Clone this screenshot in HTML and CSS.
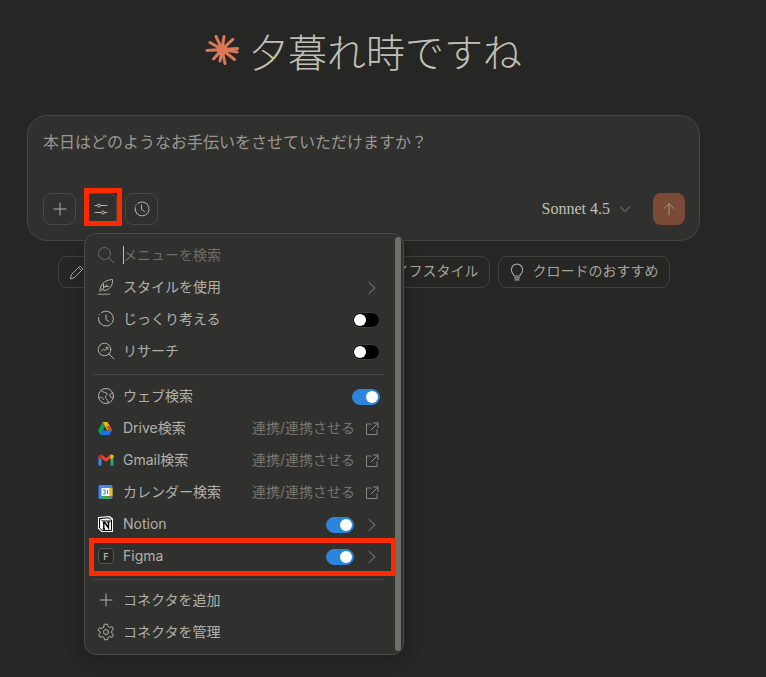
FILE: index.html
```html
<!DOCTYPE html>
<html lang="ja">
  <head>
    <meta charset="UTF-8" />
    <title>夕暮れ時ですね</title>
    <link rel="stylesheet" href="styles.css">
  </head>
  <body>
    <div class="page">
      <h1 class="greeting">
        <svg class="spark" viewBox="0 0 34 34" fill="#d97757" stroke="#d97757" stroke-width="3" stroke-linecap="round">
          <circle cx="17" cy="16.500" r="5.500" stroke="none"/>
          <path d="M17 16.500 11 3.300M17 16.500 19 3.500M17 16.500 27.800 6.300M17 16.500 32.500 15.500M17 16.500 32 19M17 16.500 29.500 26.500M17 16.500 20 30.500M17 16.500 15 28M17 16.500 8.500 26M17 16.500 2 17.500M17 16.500 5 9.500"/>
        </svg>
        <span>夕暮れ時ですね</span>
      </h1>

      <div class="composer">
        <div class="prompt">本日はどのようなお手伝いをさせていただけますか？</div>
        <div class="composer-bar">
          <button class="tool-btn">
            <svg class="ico" viewBox="0 0 16 16"><path d="M8 2v12M2 8h12"/></svg>
          </button>
          <button class="tool-btn">
            <svg class="ico" viewBox="0 0 16 16"><path d="M2 4.500h2.500M7.500 4.500H14M2 11.500h6.500M11.500 11.500H14"/><circle cx="6" cy="4.500" r="1.500"/><circle cx="10" cy="11.500" r="1.500"/></svg>
          </button>
          <button class="tool-btn">
            <svg class="ico" viewBox="0 0 16 16"><path d="M4 2.200A7 7 0 1 1 1.200 6.500"/><path d="M1.300 9.500l.1.400M2.400 12l.3.300M1.900 4.300l.3-.400"/><path d="M7.500 4v4.500l3 2"/></svg>
          </button>
          <div class="model">
            <span>Sonnet 4.5</span>
            <svg class="ico ico-small" viewBox="0 0 12 12"><path d="M1.500 4 6 8.500 10.500 4"/></svg>
          </div>
          <button class="send-btn">
            <svg class="ico" viewBox="0 0 16 16"><path d="M8 14V2.800M3.200 7.400 8 2.600l4.800 4.800"/></svg>
          </button>
        </div>
      </div>

      <div class="chips">
        <!-- first three chips sit behind the menu, their labels don't show -->
        <div class="chip chip-first">
          <svg class="ico" viewBox="0 0 16 16"><path d="M1.500 14.500 2.500 10.500 11 2l3 3-8.500 8.500zM9.500 3.500l3 3"/></svg>
        </div>
        <div class="chip chip-small"></div>
        <div class="chip chip-mid"></div>
        <div class="chip">
          <svg class="ico" viewBox="0 0 16 16"><path d="M2 14V6l6-4 6 4v8z"/></svg>
          <span class="chip-text">ライフスタイル</span>
        </div>
        <div class="chip">
          <svg class="ico chip-bulb" viewBox="0 0 16 16"><path d="M5.500 11.500C5.300 10 3 9.200 3 6a5 5 0 0 1 10 0c0 3.200-2.300 4-2.500 5.500zM5.800 13.200h4.400M6.300 15h3.400"/></svg>
          <span class="chip-text">クロードのおすすめ</span>
        </div>
      </div>

      <div class="menu">
        <div class="menu-row search-row">
          <svg class="ico row-ico" viewBox="0 0 18 18"><circle cx="7.500" cy="7.500" r="6"/><path d="M12 12l5 5"/></svg>
          <span class="caret"></span>
          <span class="label">メニューを検索</span>
        </div>
        <div class="menu-row">
          <svg class="ico row-ico" viewBox="0 0 18 18"><path d="M3 13C3 7 7 2 15.500 1.500 16 7 13 12 7 12.500L5 11M3.800 13 10 6.500M8 8.500h3.500M6.500 6.300V9.500"/><path d="M1 16.200c1-1 2 1 3 0s2 1 3 0 2 1 3 0 2 1 3 0"/></svg>
          <span class="label">スタイルを使用</span>
          <span class="row-end">
            <svg class="ico chev" viewBox="0 0 16 16"><path d="M5 2.500 11 8l-6 5.500"/></svg>
          </span>
        </div>
        <div class="menu-row">
          <svg class="ico row-ico" viewBox="0 0 18 18"><path d="M4.500 2.500A7.500 7.500 0 1 1 1.500 7.500"/><path d="M1.500 10.500v.4M2.700 13.400l.3.300M2.200 4.900l.3-.4"/><path d="M9 5v4.500l3 2"/></svg>
          <span class="label">じっくり考える</span>
          <span class="row-end"><span class="toggle"></span></span>
        </div>
        <div class="menu-row">
          <svg class="ico row-ico" viewBox="0 0 18 18"><circle cx="7.500" cy="7.500" r="6.300"/><path d="M12 12l5 5M4.500 9l2-2 1.500 1.500L10.800 5.500M9 5.500h1.800v1.800"/></svg>
          <span class="label">リサーチ</span>
          <span class="row-end"><span class="toggle"></span></span>
        </div>

        <div class="menu-line"></div>

        <div class="menu-row">
          <svg class="ico row-ico" viewBox="0 0 18 18"><circle cx="9" cy="9" r="7.500"/><path d="M4 3.500c2 2.500 5 1.500 6 3s-2 2-1.500 4 2.500 1.500 2.500 5M16 6c-2 0-3.500 1-3 3s2 1.500 3.500 1.500M2 11c2-1.500 4-.5 4.500 1.500"/></svg>
          <span class="label">ウェブ検索</span>
          <span class="row-end"><span class="toggle on"></span></span>
        </div>
        <div class="menu-row">
          <svg class="row-ico" viewBox="0 0 18 18">
            <path d="M5.500 3h5L15 11.500h-4.800z" fill="#f4b400"/>
            <path d="M9.500 8 12.300 6.500 15 11.500h-3.500z" fill="#ea4335"/>
            <path d="M5.500 3 8 7.500 3.500 16 1 11.500z" fill="#0f9d58"/>
            <path d="M5.800 11.500H15L12.500 16h-9z" fill="#1a73e8"/>
          </svg>
          <span class="label">Drive検索</span>
          <span class="row-end">
            <span class="connect">連携/連携させる</span>
            <svg class="ico ext" viewBox="0 0 16 16"><path d="M7 3H2.500v10.500H13V9M9.500 2H14v4.500M14 2 7.500 8.500"/></svg>
          </span>
        </div>
        <div class="menu-row">
          <svg class="row-ico" viewBox="0 0 18 18">
            <path d="M1.500 5v9.500h3V8z" fill="#4285f4"/>
            <path d="M13.500 8v6.500h3V5z" fill="#34a853"/>
            <path d="M1.500 5 4.500 3.500 9 7l4.500-3.500L16.500 5 9 10.800z" fill="#ea4335"/>
            <path d="M13.500 3.500l3 .6V6.500l-3 2z" fill="#fbbc04"/>
            <path d="M1.500 4.100l3-.6v5l-3-2z" fill="#c5221f"/>
          </svg>
          <span class="label">Gmail検索</span>
          <span class="row-end">
            <span class="connect">連携/連携させる</span>
            <svg class="ico ext" viewBox="0 0 16 16"><path d="M7 3H2.500v10.500H13V9M9.500 2H14v4.500M14 2 7.500 8.500"/></svg>
          </span>
        </div>
        <div class="menu-row">
          <svg class="row-ico" viewBox="0 0 18 18">
            <rect x="1.500" y="2" width="14" height="14" rx="1.500" fill="#4285f4"/>
            <rect x="12.500" y="5" width="3" height="8" fill="#fbbc04"/>
            <rect x="4.500" y="13" width="8" height="3" fill="#34a853"/>
            <path d="M12.500 13h3l-3 3z" fill="#ea4335"/>
            <rect x="4.500" y="5" width="8" height="8" fill="#fff"/>
            <path d="M6 7h2v4H6M9 9h-1M10.500 7v4" fill="none" stroke="#4285f4" stroke-width="1"/>
          </svg>
          <span class="label">カレンダー検索</span>
          <span class="row-end">
            <span class="connect">連携/連携させる</span>
            <svg class="ico ext" viewBox="0 0 16 16"><path d="M7 3H2.500v10.500H13V9M9.500 2H14v4.500M14 2 7.500 8.500"/></svg>
          </span>
        </div>
        <div class="menu-row">
          <svg class="row-ico" viewBox="0 0 18 18">
            <path d="M1 2 12.500 1 16 3.500V17H4.500L1 13.500z" fill="#fff"/>
            <path d="M2.500 3.500 12 2.800 14.500 5v10.500H5.200L2.500 13z" fill="#fff" stroke="#000" stroke-width="1"/>
            <path d="M4 4.500 5.500 6h9" fill="none" stroke="#000" stroke-width="1"/>
            <path d="M6.800 14V7.500h1L11.500 13V7.300M5.800 14h2.200M5.800 7.500h2M10.300 7.300h2.400" fill="none" stroke="#000" stroke-width="1.400"/>
          </svg>
          <span class="label">Notion</span>
          <span class="row-end">
            <span class="toggle on"></span>
            <svg class="ico chev" viewBox="0 0 16 16"><path d="M5 2.500 11 8l-6 5.500"/></svg>
          </span>
        </div>
        <div class="menu-row">
          <span class="letter-ico row-ico">F</span>
          <span class="label">Figma</span>
          <span class="row-end">
            <span class="toggle on"></span>
            <svg class="ico chev" viewBox="0 0 16 16"><path d="M5 2.500 11 8l-6 5.500"/></svg>
          </span>
        </div>

        <div class="menu-line menu-line-last"></div>

        <div class="menu-row">
          <svg class="ico row-ico" viewBox="0 0 18 18"><path d="M9 3v12M3 9h12"/></svg>
          <span class="label">コネクタを追加</span>
        </div>
        <div class="menu-row">
          <svg class="ico row-ico" viewBox="0 0 18 18"><circle cx="9" cy="9" r="2.500"/><path d="M7.500 1.200h3l.5 2.300 1.700 1 2.300-.8 1.500 2.600-1.800 1.500v2.400l1.800 1.500-1.500 2.600-2.300-.8-1.700 1-.5 2.300h-3l-.5-2.300-1.700-1-2.300.8-1.500-2.600 1.800-1.500V8.800L1 7.300l1.500-2.600 2.300.8 1.700-1z"/></svg>
          <span class="label">コネクタを管理</span>
        </div>
        <div class="menu-scrollbar"></div>
      </div>

      <!-- red annotation boxes from the screenshot -->
      <div class="mark mark-tool"></div>
      <div class="mark mark-figma"></div>
    </div>
  </body>
</html>
```

FILE: styles.css
```css
* {
    box-sizing: border-box;
}

body {
    margin: 0;
    background-color: #262624;
    font-family: 'Inter', 'Noto Sans CJK JP', sans-serif;
    color: #c2c0b6;
}

.page {
    position: relative;
    width: 766px;
    height: 677px;
    overflow: hidden;
    padding: 22px 66px 0 27px;
}

.ico {
    width: 16px;
    height: 16px;
    flex: none;
    fill: none;
    stroke: currentColor;
    stroke-width: 1;
    stroke-linecap: round;
    stroke-linejoin: round;
}

.ico-small {
    width: 12px;
    height: 12px;
}

/* greeting */
.greeting {
    display: flex;
    align-items: center;
    justify-content: center;
    gap: 10px;
    height: 56px;
    margin: 0 0 37px;
    font-family: 'Noto Sans CJK JP', sans-serif;
    font-size: 39px;
    font-weight: 300;
    line-height: 56px;
    color: #c2c0b6;
}

.spark {
    width: 34px;
    height: 34px;
    flex: none;
}

/* composer */
.composer {
    height: 126px;
    padding: 15px 14px 15px 15px;
    background-color: #30302e;
    border: 1px solid #454543;
    border-radius: 20px;
}

.prompt {
    height: 62px;
    font-family: 'Noto Sans CJK JP', sans-serif;
    font-size: 16px;
    line-height: 22px;
    color: #9a9890;
    transform: translateY(-1px);
}

.composer-bar {
    display: flex;
    align-items: center;
    gap: 8px;
}

.tool-btn {
    display: flex;
    align-items: center;
    justify-content: center;
    width: 33px;
    height: 32px;
    padding: 0;
    background: transparent;
    border: 1px solid #484846;
    border-radius: 8px;
    color: #b5b3a9;
}

.model {
    display: flex;
    align-items: center;
    gap: 9px;
    margin-left: auto;
    margin-right: 14px;
    font-family: 'Liberation Serif', serif;
    font-size: 16px;
    color: #c2c0b6;
}

.model .ico {
    color: #8f8d85;
}

.send-btn {
    display: flex;
    align-items: center;
    justify-content: center;
    width: 32px;
    height: 32px;
    padding: 0;
    background-color: #7a4a37;
    border: 0;
    border-radius: 8px;
    color: #a8978c;
}

/* suggestion chips */
.chips {
    display: flex;
    justify-content: center;
    gap: 8px;
    margin-top: 15px;
}

.chip {
    display: flex;
    align-items: center;
    gap: 8px;
    height: 32px;
    padding: 0 10px;
    border: 1px solid #41413e;
    border-radius: 9px;
    font-family: 'Noto Sans CJK JP', sans-serif;
    font-size: 14px;
    color: #a6a49b;
    white-space: nowrap;
}

.chip-first {
    width: 102px;
}

.chip-small {
    width: 74px;
}

.chip-mid {
    width: 88px;
}

.chip-text {
    margin-top: -4px;
}

.chip-bulb {
    width: 18px;
    height: 18px;
    margin: 0 -1px;
}

/* dropdown menu */
.menu {
    position: absolute;
    top: 233px;
    left: 84px;
    width: 320px;
    height: 422px;
    padding: 5px 19px 0 8px;
    background-color: #30302e;
    border: 1px solid #4a4a47;
    border-radius: 12px;
    box-shadow: 0 4px 16px rgba(0, 0, 0, 0.2);
}

.menu-row {
    display: flex;
    align-items: center;
    height: 32px;
    padding: 0 4px;
    font-size: 14px;
    color: #b3b1a7;
}

.row-ico {
    width: 18px;
    height: 18px;
    flex: none;
    margin-right: 8px;
}

.label,
.connect {
    margin-top: -2px;
}

.search-row {
    color: #6e6d68;
}

.caret {
    width: 1px;
    height: 18px;
    margin-right: -1px;
    background-color: #c2c0b6;
}

.row-end {
    display: flex;
    align-items: center;
    gap: 10px;
    margin-left: auto;
}

.connect {
    margin-right: -1px;
    color: #77766f;
}

.chev,
.ext {
    margin-top: 2px;
    color: #8a8880;
}

.toggle {
    position: relative;
    display: block;
    width: 28px;
    height: 16px;
    margin-top: 2px;
    background-color: #000;
    border: 1px solid #3e3e3b;
    border-radius: 8px;
}

.toggle:after {
    content: "";
    position: absolute;
    top: 1px;
    left: 1px;
    width: 12px;
    height: 12px;
    background-color: #fff;
    border-radius: 50%;
}

.toggle.on {
    background-color: #2c84db;
    border-color: #2c84db;
}

.toggle.on:after {
    left: 13px;
}

.letter-ico {
    display: flex;
    align-items: center;
    justify-content: center;
    width: 16px;
    height: 16px;
    margin-left: 1px;
    margin-right: 9px;
    border: 1px solid #555551;
    border-radius: 4px;
    font-size: 9px;
    font-weight: 600;
    color: #b3b1a7;
    background-color: #262624;
}

.menu-line {
    height: 1px;
    margin: 7px 0 5px;
    background-color: #454543;
}

.menu-line-last {
    margin-bottom: 4px;
}

.menu-scrollbar {
    position: absolute;
    top: 3px;
    right: 2px;
    width: 6px;
    height: 414px;
    background-color: #6f6f69;
    border-radius: 3px;
}

/* annotations */
.mark {
    position: absolute;
    border: 5px solid #ff2a00;
}

.mark-tool {
    top: 188px;
    left: 84px;
    width: 38px;
    height: 38px;
}

.mark-figma {
    top: 538px;
    left: 89px;
    width: 307px;
    height: 38px;
}
```
